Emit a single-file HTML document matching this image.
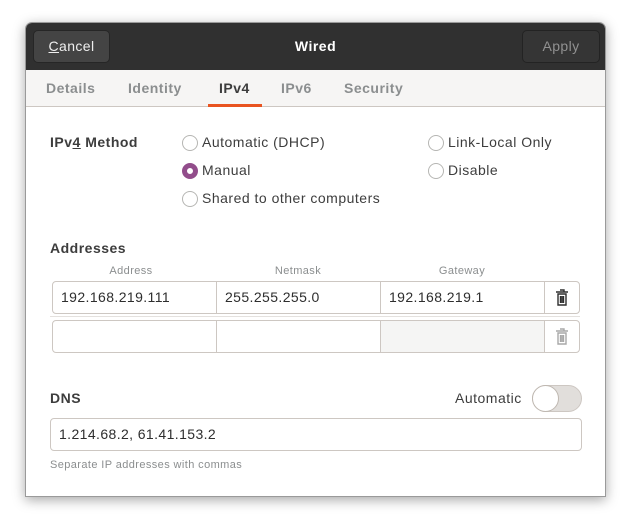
<!DOCTYPE html>
<html><head><meta charset="utf-8"><style>
*{box-sizing:border-box;margin:0;padding:0}
body{width:632px;height:527px;background:#fff;font-family:"Liberation Sans","DejaVu Sans",sans-serif;position:relative;overflow:hidden;color:#3d3d3d}
.win{position:absolute;left:25px;top:22px;width:581px;height:475px;background:#fff;border:1px solid #9a9a9a;border-radius:7px 7px 0 0;box-shadow:0 3px 12px rgba(0,0,0,.35);overflow:hidden}
.hdr{position:absolute;left:0;top:0;width:100%;height:47px;background:#303030}
.btn{position:absolute;top:7px;height:33px;border-radius:5px;font-size:14px;line-height:31px;text-align:center;letter-spacing:.4px}
.tabs{position:absolute;top:47px;left:0;width:100%;height:37px;background:#f6f5f4;border-bottom:1px solid #cdc7c2}
.tab{position:absolute;top:10px;font-size:14px;font-weight:bold;color:#8b8e8f;letter-spacing:.5px}
.a{position:absolute;font-size:14px;white-space:nowrap;letter-spacing:.5px}
.b{font-weight:bold;color:#3d3d3d}
.r{position:absolute;width:16px;height:16px;border:1px solid #b6b6b3;border-radius:50%;background:#fff}
.cell{position:absolute;height:33px;border:1px solid #cdc7c2;background:#fff;font-size:14px;line-height:31px;padding-left:8px;color:#2e2e2e;letter-spacing:.4px}
.sm{position:absolute;font-size:11px;color:#8b8e8f;letter-spacing:.4px}
</style></head><body>
<div class="win">
 <div class="hdr">
  <div class="btn" style="left:7px;width:77px;background:#444;border:1px solid #262626;color:#eee"><u>C</u>ancel</div>
  <div class="a" style="left:0;width:100%;text-align:center;top:15px;color:#fff;font-weight:bold">Wired</div>
  <div class="btn" style="left:496px;width:78px;background:#353535;border:1px solid #232323;color:#919191">Apply</div>
 </div>
 <div class="tabs">
  <div class="tab" style="left:20px">Details</div>
  <div class="tab" style="left:102px">Identity</div>
  <div class="tab" style="left:193px;color:#3d3d3d">IPv4</div>
  <div style="position:absolute;left:182px;top:34px;width:54px;height:3px;background:#e95420"></div>
  <div class="tab" style="left:255px">IPv6</div>
  <div class="tab" style="left:318px">Security</div>
 </div>
 <div class="a b" style="left:24px;top:111px">IPv<u>4</u> Method</div>
 <div class="r" style="left:156px;top:112px"></div><div class="a" style="left:176px;top:111px">Automatic (DHCP)</div>
 <div class="r" style="left:156px;top:140px;border:5px solid #924d8b"></div><div class="a" style="left:176px;top:139px">Manual</div>
 <div class="r" style="left:156px;top:168px"></div><div class="a" style="left:176px;top:167px">Shared to other computers</div>
 <div class="r" style="left:402px;top:112px"></div><div class="a" style="left:422px;top:111px">Link-Local Only</div>
 <div class="r" style="left:402px;top:140px"></div><div class="a" style="left:422px;top:139px">Disable</div>
 <div class="a b" style="left:24px;top:217px">Addresses</div>
 <div class="sm" style="left:26px;width:158px;text-align:center;top:242px">Address</div>
 <div class="sm" style="left:190px;width:164px;text-align:center;top:242px">Netmask</div>
 <div class="sm" style="left:354px;width:164px;text-align:center;top:242px">Gateway</div>
 <div class="cell" style="left:26px;top:258px;width:165px;border-radius:4px 0 0 4px">192.168.219.111</div>
 <div class="cell" style="left:190px;top:258px;width:165px">255.255.255.0</div>
 <div class="cell" style="left:354px;top:258px;width:165px">192.168.219.1</div>
 <div class="cell" style="left:518px;top:258px;width:36px;border-radius:0 4px 4px 0"></div>
 <div style="position:absolute;left:24px;top:293px;width:530px;height:1px;background:#e4e1de"></div>
 <div class="cell" style="left:26px;top:297px;width:165px;border-radius:4px 0 0 4px"></div>
 <div class="cell" style="left:190px;top:297px;width:165px"></div>
 <div class="cell" style="left:354px;top:297px;width:165px;background:#f5f5f4"></div>
 <div class="cell" style="left:518px;top:297px;width:36px;border-radius:0 4px 4px 0"></div>
 <svg style="position:absolute;left:529px;top:266px" width="14" height="17" viewBox="0 0 14 17"><path d="M5 1h4v2M1 3h12M3 5h8v11H3z M5.5 7v7M7 7v7M8.5 7v7" fill="none" stroke="#2e2e2e" stroke-width="1.4"/></svg>
 <svg style="position:absolute;left:529px;top:305px" width="14" height="17" viewBox="0 0 14 17"><path d="M5 1h4v2M1 3h12M3 5h8v11H3z M5.5 7v7M7 7v7M8.5 7v7" fill="none" stroke="#a8a8a8" stroke-width="1.4"/></svg>
 <div class="a b" style="left:24px;top:367px">DNS</div>
 <div class="a" style="left:429px;top:367px">Automatic</div>
 <div style="position:absolute;left:506px;top:362px;width:50px;height:27px;border-radius:14px;background:#e1dedb;border:1px solid #cdc7c2"></div>
 <div style="position:absolute;left:506px;top:362px;width:27px;height:27px;border-radius:50%;background:#fff;border:1px solid #bfb8b1"></div>
 <div class="cell" style="left:24px;top:395px;width:532px;height:33px;border-radius:4px">1.214.68.2, 61.41.153.2</div>
 <div class="sm" style="left:24px;top:436px">Separate IP addresses with commas</div>
</div>
</body></html>
